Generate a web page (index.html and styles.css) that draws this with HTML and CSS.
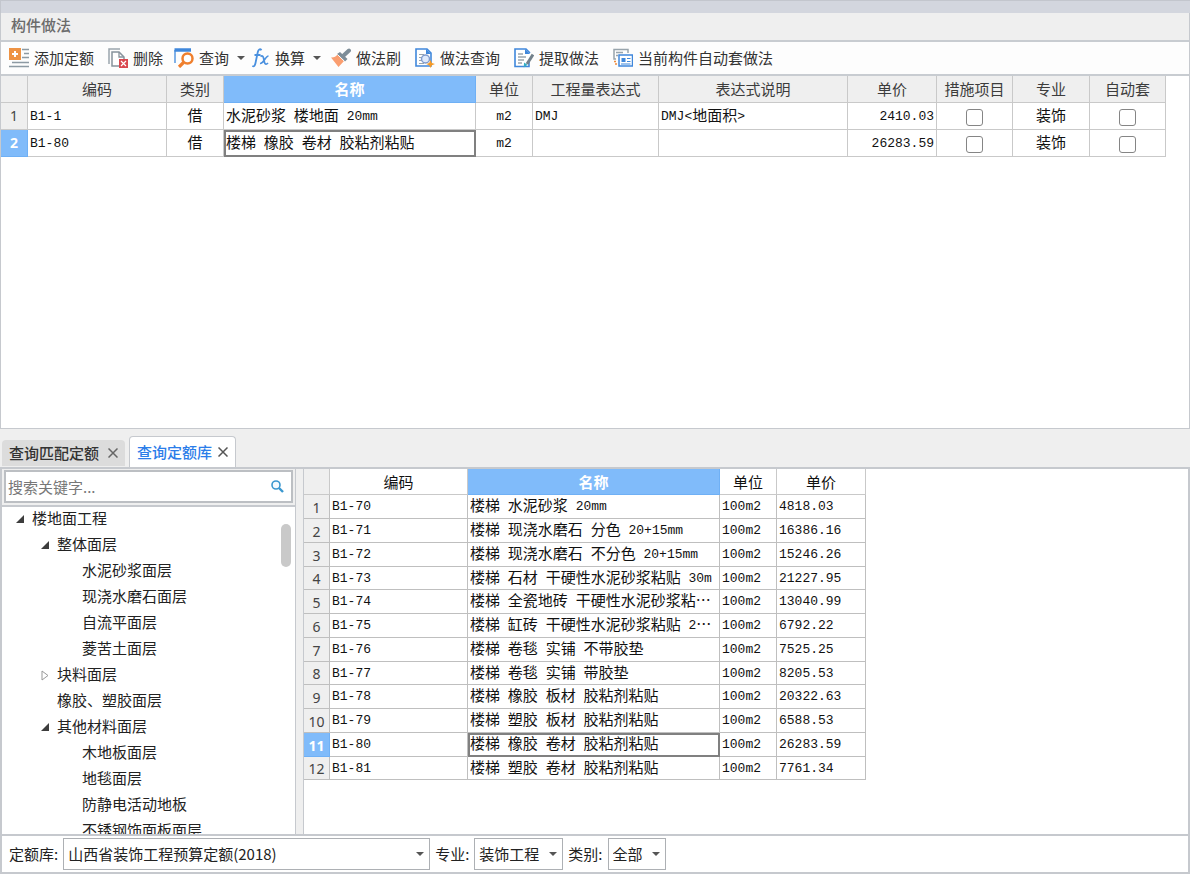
FILE: index.html
```html
<!DOCTYPE html>
<html lang="zh-CN">
<head>
<meta charset="utf-8">
<title>构件做法</title>
<link rel="stylesheet" href="styles.css">
</head>
<body>
<div class="app">
  <div class="strip"></div>
  <section class="method">
    <h1 class="title">构件做法</h1>
    <div class="toolbar">
      <button class="tool" type="button">
        <svg class="icon" viewBox="0 0 20 20"><rect x="0" y="0" width="12" height="12" fill="#ee9344"/><path d="M6 3v6M3 6h6" stroke="#fff" stroke-width="2"/><path d="M13 1.500h7M15 5.500h5M13 9.500h7M3 14.500h17M0 18.500h20" stroke="#8d9aa3" stroke-width="1.500"/></svg>
        添加定额</button>
      <button class="tool" type="button">
        <svg class="icon" viewBox="0 0 20 20"><path d="M1 16V1h11" fill="none" stroke="#9aa5ad" stroke-width="1.500"/><path d="M11 18H4V4h7l5 5v3" fill="#fff" stroke="#87939c" stroke-width="1.500"/><path d="M11 4v5h5" fill="none" stroke="#87939c" stroke-width="1.300"/><rect x="11" y="11" width="9" height="9" fill="#d9484f"/><path d="M13 13l5 5M18 13l-5 5" stroke="#fff" stroke-width="1.200"/></svg>
        删除</button>
      <button class="tool menu" type="button">
        <svg class="icon" viewBox="0 0 20 20"><path d="M1 15V2" fill="none" stroke="#4a90df" stroke-width="1.400"/><path d="M.5 2h16.500" stroke="#3f87db" stroke-width="3.500"/><circle cx="13.500" cy="10.500" r="5" fill="#fff" stroke="#ef7f2d" stroke-width="2.500"/><path d="M9.500 14.500L5 19" stroke="#ef7f2d" stroke-width="3.200"/></svg>
        查询<span class="caret"></span></button>
      <button class="tool menu" type="button">
        <svg class="icon fx" viewBox="0 0 18 20"><path d="M9.500 2.200C8 .2 6.300 1.500 5.800 4L3.500 15c-.5 2.700-1.500 4-3.200 3M2.500 7h6" fill="none" stroke="#4a90df" stroke-width="1.800"/><path d="M8.500 8.500c2-1.500 3 .3 3.200 2.500l.8 3.500c.5 2 2 2.200 3.500.5M16.500 8c-3 0-5 8-8.500 7.500" fill="none" stroke="#4a90df" stroke-width="1.700"/></svg>
        换算<span class="caret"></span></button>
      <button class="tool" type="button">
        <svg class="icon" viewBox="0 0 20 20"><path d="M0 9.500c3 .2 5-1 6.500-3l6.500 6.500-5.500 6z" fill="#fa9e70"/><path d="M6 6l3-2 7.500 7-2.500 2.500z" fill="#7d8d98"/><path d="M11.500 8.500L18 2.500" stroke="#7d8d98" stroke-width="4" stroke-linecap="round"/><path d="M6.500 6.500l7 6.800" stroke="#fff" stroke-width="1"/></svg>
        做法刷</button>
      <button class="tool" type="button">
        <svg class="icon" viewBox="0 0 20 20"><path d="M1 1h11l4 4v13H1z" fill="#fff" stroke="#3f87db" stroke-width="1.600"/><path d="M11 1v5h5z" fill="#3f87db"/><path d="M4 6.500h5M4 9.500h3M4 12.500h3M4 15.500h5" stroke="#9aa5ad"/><circle cx="10.500" cy="11" r="4" fill="#dfeafc" stroke="#7f9bcd" stroke-width="1.500"/><path d="M15.500 12l1.300 2.900 3.200 1.100-3.200 1.200-1.300 2.800-1.300-2.800-3-1.200 3-1.100z" fill="#f69a25"/></svg>
        做法查询</button>
      <button class="tool" type="button">
        <svg class="icon" viewBox="0 0 20 20"><path d="M15 14v4.500H1V1h11l4 4" fill="#fff" stroke="#3f87db" stroke-width="1.600"/><path d="M11 1v5h5z" fill="#3f87db"/><path d="M4 6h5M4 9h8M4 12h6M4 15h4" stroke="#9aa5ad" stroke-width="1.300"/><path d="M19 6.500l-6 9.500" stroke="#72808b" stroke-width="3"/><path d="M10 14.500l3.500 2.300-3.700 2.700z" fill="#35aec3"/></svg>
        提取做法</button>
      <button class="tool" type="button">
        <svg class="icon" viewBox="0 0 20 20"><path d="M3 11H1V1.500h14V5" fill="none" stroke="#98a4ac" stroke-width="1.500"/><path d="M3 4.500h7M3 7.500h2" stroke="#98a4ac" stroke-width="1.300"/><rect x="6" y="7" width="13.500" height="11" fill="#fff" stroke="#3f87db" stroke-width="1.500"/><rect x="8.500" y="10" width="4" height="4" fill="#3f87db"/><path d="M14 10.500h3.500M14 13.500h3.500M8 16h9.500" stroke="#3f87db" stroke-width="1.200"/><path d="M1 13.500h2M2 16h2" stroke="#f08a3c" stroke-width="1.500"/></svg>
        当前构件自动套做法</button>
    </div>
    <div class="sheet">
      <table class="grid main">
        <colgroup><col class="w27"><col class="w139"><col class="w57"><col class="w252"><col class="w57"><col class="w126"><col class="w189"><col class="w89"><col class="w76"><col class="w77"><col class="w76"></colgroup>
        <thead><tr><th></th><th>编码</th><th>类别</th><th class="hot">名称</th><th>单位</th><th>工程量表达式</th><th>表达式说明</th><th>单价</th><th>措施项目</th><th>专业</th><th>自动套</th></tr></thead>
        <tbody>
          <tr><th class="num">1</th><td>B1-1</td><td class="mid"><span class="zh">借</span></td><td><span class="zh">水泥砂浆</span> <span class="zh">楼地面</span> 20mm</td><td class="mid">m2</td><td>DMJ</td><td>DMJ&lt;<span class="zh">地面积</span>&gt;</td><td class="end">2410.03</td><td class="mid"><input type="checkbox" aria-label="措施项目 1"></td><td class="mid"><span class="zh">装饰</span></td><td class="mid"><input type="checkbox" aria-label="自动套 1"></td></tr>
          <tr><th class="num hot">2</th><td>B1-80</td><td class="mid"><span class="zh">借</span></td><td class="current"><span class="zh">楼梯</span> <span class="zh">橡胶</span> <span class="zh">卷材</span> <span class="zh">胶粘剂粘贴</span></td><td class="mid">m2</td><td></td><td></td><td class="end">26283.59</td><td class="mid"><input type="checkbox" aria-label="措施项目 2"></td><td class="mid"><span class="zh">装饰</span></td><td class="mid"><input type="checkbox" aria-label="自动套 2"></td></tr>
        </tbody>
      </table>
    </div>
  </section>

  <nav class="tabs">
    <div class="tab"><button class="tab-name" type="button">查询匹配定额</button><button class="close" type="button" aria-label="关闭"><svg viewBox="0 0 10 10"><path d="M.5.5l9 9M9.500.5l-9 9" stroke="#666" stroke-width="1.500"/></svg></button></div>
    <div class="tab active"><button class="tab-name" type="button">查询定额库</button><button class="close" type="button" aria-label="关闭"><svg viewBox="0 0 10 10"><path d="M.5.5l9 9M9.500.5l-9 9" stroke="#555" stroke-width="1.500"/></svg></button></div>
  </nav>

  <section class="library">
    <div class="panes">
      <aside class="side">
        <div class="searchbox">
          <div class="search">
            <input type="text" placeholder="搜索关键字..." aria-label="搜索关键字">
            <svg viewBox="0 0 13 13"><circle cx="5" cy="5" r="4" fill="#f4faff" stroke="#3a97cf" stroke-width="1.600"/><path d="M8 8l4 4" stroke="#3a97cf" stroke-width="2.400"/></svg>
          </div>
        </div>
        <div class="treebox">
          <ul class="tree">
            <li class="l1"><i class="open"></i>楼地面工程</li>
            <li class="l2"><i class="open"></i>整体面层</li>
            <li class="l3">水泥砂浆面层</li>
            <li class="l3">现浇水磨石面层</li>
            <li class="l3">自流平面层</li>
            <li class="l3">菱苦土面层</li>
            <li class="l2"><i class="shut"><svg viewBox="0 0 8 11"><path d="M1 1l6 4.500-6 4.500z" fill="#fff" stroke="#999"/></svg></i>块料面层</li>
            <li class="l2"><i></i>橡胶、塑胶面层</li>
            <li class="l2"><i class="open"></i>其他材料面层</li>
            <li class="l3">木地板面层</li>
            <li class="l3">地毯面层</li>
            <li class="l3">防静电活动地板</li>
            <li class="l3">不锈钢饰面板面层</li>
          </ul>
          <div class="track"><div class="thumb"></div></div>
        </div>
      </aside>
      <div class="results">
        <table class="grid quota">
          <colgroup><col class="w26"><col class="w138"><col class="w252"><col class="w57"><col class="w89"></colgroup>
          <thead><tr><th class="corner"></th><th>编码</th><th class="hot">名称</th><th>单位</th><th>单价</th></tr></thead>
          <tbody>
            <tr><th class="num">1</th><td>B1-70</td><td><span class="zh">楼梯</span> <span class="zh">水泥砂浆</span> 20mm</td><td>100m2</td><td>4818.03</td></tr>
            <tr><th class="num">2</th><td>B1-71</td><td><span class="zh">楼梯</span> <span class="zh">现浇水磨石</span> <span class="zh">分色</span> 20+15mm</td><td>100m2</td><td>16386.16</td></tr>
            <tr><th class="num">3</th><td>B1-72</td><td><span class="zh">楼梯</span> <span class="zh">现浇水磨石</span> <span class="zh">不分色</span> 20+15mm</td><td>100m2</td><td>15246.26</td></tr>
            <tr><th class="num">4</th><td>B1-73</td><td><span class="zh">楼梯</span> <span class="zh">石材</span> <span class="zh">干硬性水泥砂浆粘贴</span> 30m</td><td>100m2</td><td>21227.95</td></tr>
            <tr><th class="num">5</th><td>B1-74</td><td><span class="zh">楼梯</span> <span class="zh">全瓷地砖</span> <span class="zh">干硬性水泥砂浆粘⋯</span></td><td>100m2</td><td>13040.99</td></tr>
            <tr><th class="num">6</th><td>B1-75</td><td><span class="zh">楼梯</span> <span class="zh">缸砖</span> <span class="zh">干硬性水泥砂浆粘贴</span> 2<span class="zh">⋯</span></td><td>100m2</td><td>6792.22</td></tr>
            <tr><th class="num">7</th><td>B1-76</td><td><span class="zh">楼梯</span> <span class="zh">卷毯</span> <span class="zh">实铺</span> <span class="zh">不带胶垫</span></td><td>100m2</td><td>7525.25</td></tr>
            <tr><th class="num">8</th><td>B1-77</td><td><span class="zh">楼梯</span> <span class="zh">卷毯</span> <span class="zh">实铺</span> <span class="zh">带胶垫</span></td><td>100m2</td><td>8205.53</td></tr>
            <tr><th class="num">9</th><td>B1-78</td><td><span class="zh">楼梯</span> <span class="zh">橡胶</span> <span class="zh">板材</span> <span class="zh">胶粘剂粘贴</span></td><td>100m2</td><td>20322.63</td></tr>
            <tr><th class="num">10</th><td>B1-79</td><td><span class="zh">楼梯</span> <span class="zh">塑胶</span> <span class="zh">板材</span> <span class="zh">胶粘剂粘贴</span></td><td>100m2</td><td>6588.53</td></tr>
            <tr><th class="num hot">11</th><td>B1-80</td><td class="current"><span class="zh">楼梯</span> <span class="zh">橡胶</span> <span class="zh">卷材</span> <span class="zh">胶粘剂粘贴</span></td><td>100m2</td><td>26283.59</td></tr>
            <tr><th class="num">12</th><td>B1-81</td><td><span class="zh">楼梯</span> <span class="zh">塑胶</span> <span class="zh">卷材</span> <span class="zh">胶粘剂粘贴</span></td><td>100m2</td><td>7761.34</td></tr>
          </tbody>
        </table>
      </div>
    </div>
    <form class="filters">
      <label for="lib">定额库:</label>
      <span class="pick lib"><select id="lib"><option>山西省装饰工程预算定额(2018)</option></select></span>
      <label for="major">专业:</label>
      <span class="pick major"><select id="major"><option>装饰工程</option></select></span>
      <label for="kind">类别:</label>
      <span class="pick kind"><select id="kind"><option>全部</option></select></span>
    </form>
  </section>
</div>
</body>
</html>
```
FILE: styles.css
```css
* { box-sizing: border-box; }
body {
  margin: 0;
  background: #efefef;
  color: #222;
  font: 15px/20px "Noto Sans CJK SC", sans-serif;
}
button, input, select { font: inherit; color: inherit; }
button { border: 0; background: none; padding: 0; }

.app { display: flex; flex-direction: column; height: 100vh; }
.strip { flex: none; height: 13px; background: #d3d6de; border-top: 1px solid #c3c6cd; border-left: 1px solid #c3c6cd; }

.method {
  flex: 418 1 0;
  display: flex;
  flex-direction: column;
  min-height: 0;
  border: 1px solid #c6c9ce;
  border-top: 0;
}
.title {
  margin: 0;
  padding: 2px 10px 5px;
  border-bottom: 2px solid #c8ccd1;
  background: #efefef;
  color: #6b6b6b;
  font-size: 15px;
  font-weight: 500;
}
.toolbar {
  display: flex;
  height: 34px;
  padding: 0 0 1px 1px;
  border-bottom: 2px solid #c8ccd1;
  background: #fdfdfd;
}
.tool { display: flex; align-items: center; gap: 5px; padding: 0 7px; color: #333; white-space: nowrap; }
.tool.menu { padding: 0 3px 0 4px; }
.icon { width: 20px; height: 20px; }
.icon.fx { width: 18px; }
.caret { margin-left: 3px; border: 4px solid transparent; border-top-color: #555; border-bottom: 0; }
.sheet { flex: 1; background: #fff; overflow: hidden; }

.grid {
  table-layout: fixed;
  border-collapse: separate;
  border-spacing: 0;
  font-family: "Liberation Mono", "Noto Sans CJK SC", monospace;
  font-size: 13px;
  color: #111;
}
.grid th, .grid td {
  padding: 0 2px;
  border-right: 1px solid #c9c9c9;
  border-bottom: 1px solid #c9c9c9;
  text-align: left;
  line-height: 20px;
  white-space: nowrap;
}
.grid td { padding-top: 2px; }
.grid thead th {
  background: #efefef;
  color: #3c3c3c;
  font: 400 15px/20px "Noto Sans CJK SC", sans-serif;
  text-align: center;
}
.grid .zh { font: 15px/16px "Noto Sans CJK SC", sans-serif; vertical-align: -1px; }
.grid .num {
  background: #efefef;
  color: #444;
  font: 400 14px/20px "Noto Sans", sans-serif;
  text-align: center;
}
.grid thead th.hot, .grid .num.hot { background: #80bbfa; border-color: #6fb0f5; color: #fff; font-weight: 700; }
.grid td.mid { text-align: center; }
.grid td.end { text-align: right; }
.grid td.current { outline: 2px solid #808080; outline-offset: -2px; }
.grid input {
  appearance: none;
  display: block;
  width: 17px;
  height: 17px;
  margin: 0 auto;
  border: 1px solid #858585;
  border-radius: 3px;
  background: #fff;
}
.w26 { width: 26px; } .w27 { width: 27px; } .w57 { width: 57px; }
.w76 { width: 76px; } .w77 { width: 77px; } .w89 { width: 89px; }
.w126 { width: 126px; } .w138 { width: 138px; } .w139 { width: 139px; }
.w189 { width: 189px; } .w252 { width: 252px; }
.main { width: 1165px; }
.main tr { height: 27px; }
.quota { width: 562px; height: 311px; }
.quota thead th { height: 26px; background: #fff; color: #111; }
.quota thead th.corner { background: #efefef; }
.quota td, .quota .num { vertical-align: top; border-color: #bfbfbf; }
.quota .num { vertical-align: bottom; }

.tabs { flex: none; display: flex; align-items: flex-end; height: 38px; padding: 0 2px; }
.tab {
  display: flex;
  align-items: center;
  gap: 9px;
  height: 26px;
  margin: 0 4px 1px 0;
  padding: 0 7px;
  border-radius: 4px 4px 0 0;
  background: #dcdcdc;
  color: #333;
}
.tab.active {
  gap: 6px;
  height: 31px;
  margin-bottom: 0;
  border: 1px solid #c6c9ce;
  border-bottom: 0;
  background: #fff;
  color: #2b7de9;
}
.tab-name { font-weight: 500; }
.close { display: flex; }
.close svg { width: 10px; height: 10px; }

.library { flex: 405 1 0; display: flex; flex-direction: column; min-height: 0; border: 2px solid #c6c9ce; }
.panes { flex: 1; display: flex; gap: 7px; min-height: 0; border-bottom: 2px solid #c6c9ce; }
.side { flex: none; width: 294px; display: flex; flex-direction: column; border-right: 1px solid #c6c9ce; }
.searchbox { padding: 1px 2px 2px; border-bottom: 2px solid #c6c9ce; }
.search { display: flex; align-items: center; height: 33px; padding: 0 7px 0 2px; border: 2px solid #bcbfc3; background: #fff; }
.search input { flex: 1; min-width: 0; padding: 0; border: 0; outline: 0; background: none; }
.search input::placeholder { color: #777; opacity: 1; }
.search svg { width: 13px; height: 13px; }
.treebox { flex: 1; display: flex; min-height: 0; overflow: hidden; background: #fff; }
.tree { flex: 1; margin: -2px 0 0; padding: 0; list-style: none; }
.tree li { display: flex; height: 26px; line-height: 26px; white-space: nowrap; }
.tree .l1 { padding-left: 14px; }
.tree .l2 { padding-left: 39px; }
.tree .l3 { padding-left: 80px; }
.tree i { display: flex; flex: none; align-items: center; width: 16px; padding-top: 2px; }
.tree .open::before { content: ""; border-left: 8px solid transparent; border-bottom: 8px solid #3d3d3d; }
.tree .shut svg { width: 8px; height: 11px; }
.track { flex: none; width: 15px; padding: 17px 4px 0 1px; }
.thumb { height: 43px; border-radius: 5px; background: #c9c9c9; }
.results { flex: 1; min-width: 0; border-left: 1px solid #c6c9ce; background: #fff; overflow: hidden; }

.filters { flex: none; display: flex; align-items: center; gap: 5px; height: 36px; padding-left: 7px; background: #fff; }
.pick { display: flex; position: relative; height: 32px; }
.pick select { appearance: none; width: 100%; padding: 0 4px; border: 1px solid #adb0b4; border-radius: 0; background: #fff; }
.pick::after {
  content: "";
  position: absolute;
  right: 6px;
  top: 14px;
  border: 4px solid transparent;
  border-top-color: #555;
  border-bottom: 0;
  pointer-events: none;
}
.pick.lib { width: 367px; }
.pick.major { width: 89px; }
.pick.kind { width: 58px; }
```
